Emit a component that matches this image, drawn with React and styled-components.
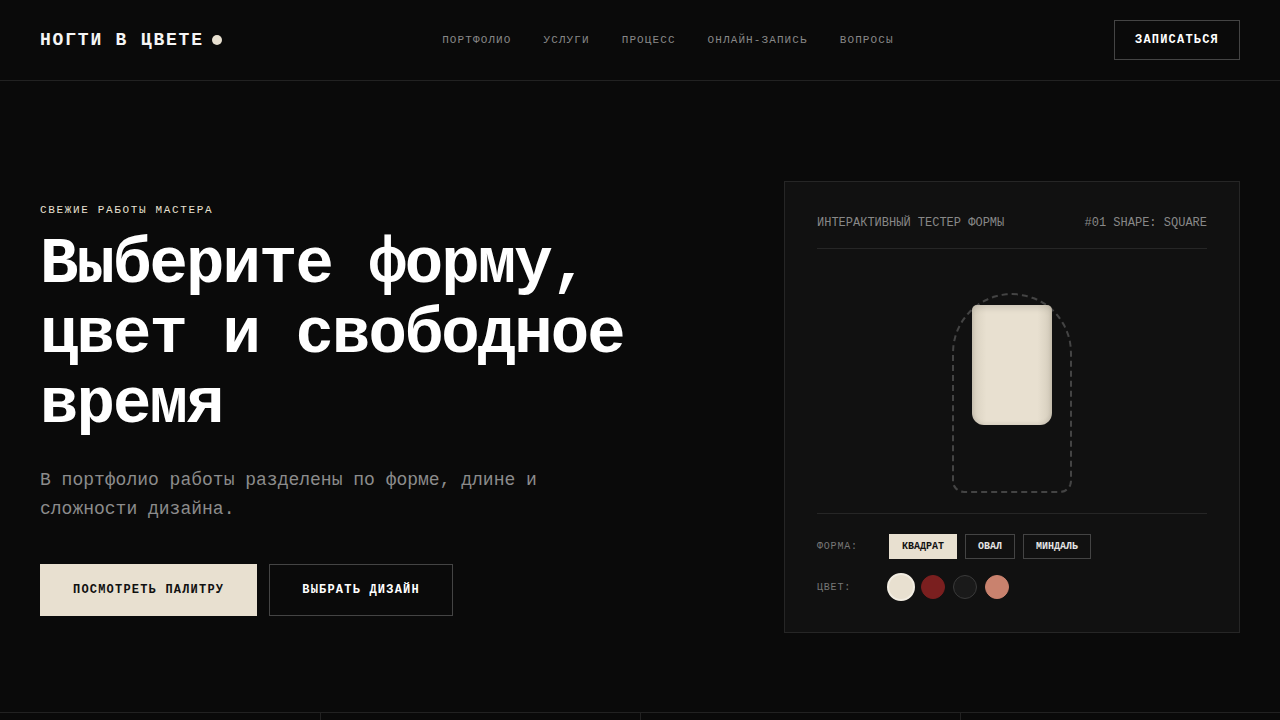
import React, { useState } from "react";
import styled, { createGlobalStyle } from "styled-components";

const GlobalStyle = createGlobalStyle`
  * { box-sizing: border-box; }
  html, body { margin: 0; padding: 0; background: #0a0a0a; }
  body {
    font-family: "Liberation Mono", "DejaVu Sans Mono", monospace;
    color: #ffffff;
    -webkit-font-smoothing: antialiased;
  }
  button { font-family: inherit; }
`;

const Page = styled.div`
  min-height: 720px;
  background: #0a0a0a;
  overflow: hidden;
`;

const Header = styled.header`
  height: 81px;
  padding: 0 40px;
  display: flex;
  align-items: center;
  justify-content: space-between;
  border-bottom: 1px solid #222;
`;

const Logo = styled.div`
  display: flex;
  align-items: center;
  gap: 8px;
  font-size: 18px;
  font-weight: 700;
  letter-spacing: 0.1em;
  color: #f5f5f5;
`;

const LogoDot = styled.span`
  width: 10px;
  height: 10px;
  border-radius: 50%;
  background: #e8e0d0;
`;

const Nav = styled.nav`
  display: flex;
  gap: 32px;
`;

const NavLink = styled.a`
  font-size: 11px;
  letter-spacing: 0.1em;
  color: #888;
  text-decoration: none;
  text-transform: uppercase;
`;

const OutlineButton = styled.button`
  height: ${(p) => (p.$large ? "52px" : "40px")};
  padding: ${(p) => (p.$large ? "0 32px" : "0 20px")};
  background: transparent;
  border: 1px solid #444;
  color: #fff;
  font-size: 12px;
  font-weight: 700;
  letter-spacing: 0.1em;
  text-transform: uppercase;
  cursor: pointer;
`;

const PrimaryButton = styled.button`
  height: 52px;
  padding: 0 33px;
  background: #e8e0d0;
  border: none;
  color: #111;
  font-size: 12px;
  font-weight: 700;
  letter-spacing: 0.1em;
  text-transform: uppercase;
  cursor: pointer;
`;

const Hero = styled.section`
  display: grid;
  grid-template-columns: 1fr 456px;
  gap: 64px;
  align-items: start;
  padding: 100px 40px 79px;
`;

const Intro = styled.div`
  display: flex;
  flex-direction: column;
  padding-top: 21px;
`;

const Eyebrow = styled.div`
  font-size: 11px;
  line-height: 16px;
  letter-spacing: 0.15em;
  color: #e8e0d0;
  text-transform: uppercase;
  margin-bottom: 12px;
`;

const Title = styled.h1`
  margin: 0 0 26px;
  font-size: 64px;
  line-height: 70px;
  font-weight: 700;
  letter-spacing: -0.03em;
  color: #fff;
`;

const Lead = styled.p`
  margin: 0 0 40px;
  max-width: 520px;
  font-size: 18px;
  line-height: 29px;
  color: #8c8c8c;
`;

const Actions = styled.div`
  display: flex;
  gap: 12px;
`;

const Card = styled.div`
  background: #111;
  border: 1px solid #262626;
  padding: 33px 32px 31px;
`;

const CardHead = styled.div`
  display: flex;
  justify-content: space-between;
  padding-bottom: 17px;
  border-bottom: 1px solid #262626;
  font-size: 12px;
  line-height: 16px;
  color: #888;
`;

const Viewer = styled.div`
  display: flex;
  justify-content: center;
  padding: 44px 0 20px;
  border-bottom: 1px solid #262626;
`;

const Finger = styled.div`
  width: 120px;
  height: 200px;
  border: 2px dashed #444;
  border-radius: 60px 60px 12px 12px;
  display: flex;
  justify-content: center;
  padding-top: 10px;
`;

const Nail = styled.div`
  width: 80px;
  height: 120px;
  border-radius: ${(p) => p.$radius};
  background: linear-gradient(90deg, #d8d0bf 0%, ${(p) => p.$color} 18%, ${(p) => p.$color} 82%, #d4ccbb 100%);
  box-shadow: inset 0 3px 6px rgba(0, 0, 0, 0.12), inset 0 -2px 4px rgba(0, 0, 0, 0.06);
`;

const Controls = styled.div`
  display: flex;
  flex-direction: column;
  gap: 14px;
  padding-top: 20px;
`;

const ControlRow = styled.div`
  display: flex;
  align-items: center;
`;

const ControlLabel = styled.span`
  width: 72px;
  font-size: 10px;
  letter-spacing: 0.08em;
  color: #777;
  text-transform: uppercase;
`;

const Options = styled.div`
  display: flex;
  align-items: center;
  gap: 8px;
`;

const ShapeButton = styled.button`
  height: 25px;
  padding: 0 12px;
  border: 1px solid ${(p) => (p.$active ? "#e8e0d0" : "#444")};
  background: ${(p) => (p.$active ? "#e8e0d0" : "transparent")};
  color: ${(p) => (p.$active ? "#111" : "#e5e5e5")};
  font-size: 10px;
  font-weight: 700;
  text-transform: uppercase;
  cursor: pointer;
`;

const Swatch = styled.button`
  width: ${(p) => (p.$active ? "28px" : "24px")};
  height: ${(p) => (p.$active ? "28px" : "24px")};
  margin: ${(p) => (p.$active ? "0 -2px" : "0")};
  padding: 0;
  border-radius: 50%;
  background: ${(p) => p.$color};
  border: ${(p) => (p.$active ? "2px solid #f2ede2" : `1px solid ${p.$border}`)};
  cursor: pointer;
`;

const Stats = styled.section`
  display: grid;
  grid-template-columns: repeat(4, 1fr);
  border-top: 1px solid #222;
`;

const StatCell = styled.div`
  min-height: 120px;
  padding: 32px 40px;
  border-left: 1px solid #222;
  &:first-child { border-left: none; }
`;

const shapes = [
  { id: "square", label: "Квадрат", radius: "5px 5px 12px 12px" },
  { id: "oval", label: "Овал", radius: "40px 40px 40px 40px" },
  { id: "almond", label: "Миндаль", radius: "40px 40px 14px 14px / 60px 60px 14px 14px" },
];

const colors = [
  { id: "milk", value: "#e8e0d0", border: "#e8e0d0" },
  { id: "wine", value: "#7a1f1f", border: "#7a1f1f" },
  { id: "black", value: "#1a1a1a", border: "#3a3a3a" },
  { id: "nude", value: "#c9826e", border: "#c9826e" },
];

export default function App() {
  const [shape, setShape] = useState(shapes[0]);
  const [color, setColor] = useState(colors[0]);

  return (
    <Page>
      <GlobalStyle />
      <Header>
        <Logo>
          НОГТИ В ЦВЕТЕ
          <LogoDot />
        </Logo>
        <Nav>
          <NavLink href="#">Портфолио</NavLink>
          <NavLink href="#">Услуги</NavLink>
          <NavLink href="#">Процесс</NavLink>
          <NavLink href="#">Онлайн-запись</NavLink>
          <NavLink href="#">Вопросы</NavLink>
        </Nav>
        <OutlineButton>Записаться</OutlineButton>
      </Header>

      <Hero>
        <Intro>
          <Eyebrow>Свежие работы мастера</Eyebrow>
          <Title>Выберите форму, цвет и свободное время</Title>
          <Lead>В портфолио работы разделены по форме, длине и сложности дизайна.</Lead>
          <Actions>
            <PrimaryButton>Посмотреть палитру</PrimaryButton>
            <OutlineButton $large>Выбрать дизайн</OutlineButton>
          </Actions>
        </Intro>

        <Card>
          <CardHead>
            <span>ИНТЕРАКТИВНЫЙ ТЕСТЕР ФОРМЫ</span>
            <span>#01 SHAPE: {shape.id.toUpperCase()}</span>
          </CardHead>
          <Viewer>
            <Finger>
              <Nail $radius={shape.radius} $color={color.value} />
            </Finger>
          </Viewer>
          <Controls>
            <ControlRow>
              <ControlLabel>Форма:</ControlLabel>
              <Options>
                {shapes.map((s) => (
                  <ShapeButton key={s.id} $active={s.id === shape.id} onClick={() => setShape(s)}>
                    {s.label}
                  </ShapeButton>
                ))}
              </Options>
            </ControlRow>
            <ControlRow>
              <ControlLabel>Цвет:</ControlLabel>
              <Options>
                {colors.map((c) => (
                  <Swatch
                    key={c.id}
                    $color={c.value}
                    $border={c.border}
                    $active={c.id === color.id}
                    onClick={() => setColor(c)}
                    aria-label={c.id}
                  />
                ))}
              </Options>
            </ControlRow>
          </Controls>
        </Card>
      </Hero>

      <Stats>
        <StatCell />
        <StatCell />
        <StatCell />
        <StatCell />
      </Stats>
    </Page>
  );
}
